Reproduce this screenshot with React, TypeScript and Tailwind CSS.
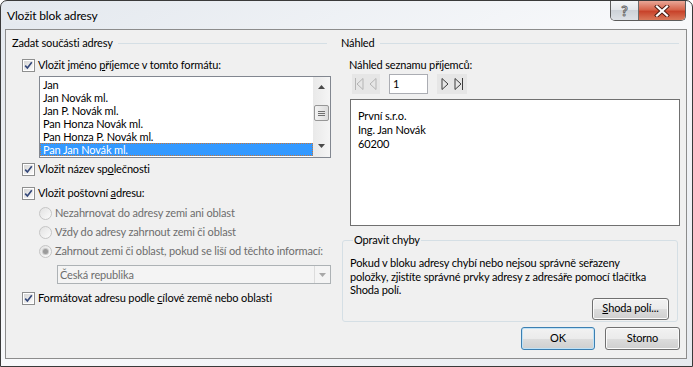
import React from 'react';

const Check = () => (
  <span className="flex h-[13px] w-[13px] shrink-0 items-center justify-center border border-[#8e8f8f] bg-white p-px">
    <span className="flex h-full w-full items-center justify-center bg-gradient-to-br from-[#d6d6d6] to-[#fbfbfb]">
      <svg width="9" height="9" viewBox="0 0 9 9">
        <path d="M1.2 4.6 L3.4 7 L7.8 1.2" fill="none" stroke="#34487a" strokeWidth="1.6" />
      </svg>
    </span>
  </span>
);

const Radio = ({ checked }: { checked?: boolean }) => (
  <span className="flex h-[13px] w-[13px] shrink-0 items-center justify-center rounded-full border border-[#c5c5c5] bg-gradient-to-br from-[#e2e2e2] to-[#fbfbfb]">
    {checked && <span className="h-[5px] w-[5px] rounded-full bg-[#9b9b9b] shadow-[0_0_0_1px_#c9c9c9]" />}
  </span>
);

const GroupHeader = ({ label }: { label: string }) => (
  <div className="flex h-[14px] items-center">
    <span className="leading-[14px]">{label}</span>
    <span className="ml-[5px] h-px flex-1 bg-[#d5dfe5]" />
  </div>
);

const WinButton = ({ children, className, isDefault }: { children: React.ReactNode; className: string; isDefault?: boolean }) => (
  <button
    className={`flex items-center justify-center rounded-[3px] border bg-[linear-gradient(#f2f2f2_0%,#ebebeb_50%,#dddddd_50%,#cfcfcf_100%)] text-black ${
      isDefault ? 'border-[#3c7fb1] shadow-[inset_0_0_0_1px_#bfe2f7]' : 'border-[#707070] shadow-[inset_0_0_0_1px_#fbfbfb]'
    } ${className}`}
  >
    {children}
  </button>
);

const NavIcon = ({ dir, bar, color }: { dir: 'l' | 'r'; bar?: boolean; color: string }) => (
  <svg width="10" height="14" viewBox="0 0 10 14">
    {dir === 'l' ? (
      <>
        {bar && <line x1="1.5" y1="1" x2="1.5" y2="13" stroke={color} />}
        <path d={bar ? 'M9 1.5 L3 7 L9 12.5 Z' : 'M8 1.5 L2 7 L8 12.5 Z'} fill="none" stroke={color} />
      </>
    ) : (
      <>
        <path d={bar ? 'M1 1.5 L7 7 L1 12.5 Z' : 'M2 1.5 L8 7 L2 12.5 Z'} fill="none" stroke={color} />
        {bar && <line x1="8.5" y1="1" x2="8.5" y2="13" stroke={color} />}
      </>
    )}
  </svg>
);

const names = ['Jan', 'Jan Novák ml.', 'Jan P. Novák ml.', 'Pan Honza Novák ml.', 'Pan Honza P. Novák ml.', 'Pan Jan Novák ml.'];

export default function App() {
  return (
    <div className="h-[367px] w-[693px] overflow-hidden bg-white font-['Lato','Segoe_UI',sans-serif] text-[11px] tracking-[-0.15px] text-black">
      <div className="flex h-[367px] w-[693px] flex-col rounded-t-[7px] border border-[#3a3a3a] bg-gradient-to-br from-[#e3e8ee] via-[#f8f9fb] to-[#e6eaef]">
        {/* Title bar */}
        <div className="flex h-[28px] items-start justify-between">
          <span className="pl-[6px] pt-[8px] text-[12px] leading-[14px] [text-shadow:0_0_6px_#ffffff]">Vložit blok adresy</span>
          <div className="mr-[6px] flex h-[20px] overflow-hidden rounded-b-[5px] border border-t-0 border-[#5b5b5b]">
            <div className="flex w-[28px] items-center justify-center border-r border-[#6b6b6b] bg-[linear-gradient(#f4f5f7_0%,#e2e5e9_50%,#cdd2d8_50%,#dde1e6_100%)]">
              <span className="text-[14px] font-bold leading-none text-white [-webkit-text-stroke:1px_#6a6a6a]">?</span>
            </div>
            <div className="flex w-[46px] items-center justify-center bg-[linear-gradient(#e9a797_0%,#d7654c_45%,#c8432b_55%,#d9785a_100%)]">
              <svg width="16" height="12" viewBox="0 0 16 12">
                <path d="M3 1.5 L13 10.5 M13 1.5 L3 10.5" stroke="#4a1c12" strokeWidth="4" strokeLinecap="square" />
                <path d="M3 1.5 L13 10.5 M13 1.5 L3 10.5" stroke="#ffffff" strokeWidth="2.2" strokeLinecap="square" />
              </svg>
            </div>
          </div>
        </div>

        {/* Content panel */}
        <div className="ml-[4px] flex h-[330px] w-[682px] border border-[#8c8c8c] bg-[#f0f0f0]">
          {/* Left column */}
          <div className="flex w-[329px] flex-col pl-[6px] pr-[8px] pt-[6px]">
            <GroupHeader label="Zadat součásti adresy" />
            <div className="ml-[10px] mt-[8px] flex h-[14px] items-center gap-[3px]">
              <Check />
              <span className="leading-[14px]">
                Vložit jméno <span className="underline">p</span>říjemce v tomto formátu:
              </span>
            </div>
            <div className="ml-[27px] mt-[4px] flex h-[82px] w-[292px] border border-[#828790] bg-white">
              <div className="flex flex-1 flex-col pt-px">
                {names.map((n, i) =>
                  i === names.length - 1 ? (
                    <div key={n} className="h-[13px] border border-dotted border-[#c9773a] bg-[#3399ff] pl-[2px] leading-[11px] text-white">
                      {n}
                    </div>
                  ) : (
                    <div key={n} className="h-[13px] pl-[3px] leading-[13px]">
                      {n}
                    </div>
                  )
                )}
              </div>
              <div className="flex w-[17px] flex-col items-center bg-gradient-to-r from-[#e9e9e9] to-[#f5f5f5]">
                <div className="flex h-[17px] items-center justify-center pt-[2px]">
                  <svg width="7" height="4" viewBox="0 0 7 4">
                    <path d="M0 4 L3.5 0 L7 4 Z" fill="#4a4a4a" />
                  </svg>
                </div>
                <div className="mt-[11px] flex h-[16px] w-[15px] flex-col items-center justify-center gap-px rounded-[2px] border border-[#979797] bg-gradient-to-r from-[#f3f3f3] to-[#dcdcdc]">
                  <span className="h-px w-[7px] bg-[#6f6f6f]" />
                  <span className="h-px w-[7px] bg-[#6f6f6f]" />
                  <span className="h-px w-[7px] bg-[#6f6f6f]" />
                </div>
                <div className="flex flex-1 items-end justify-center pb-[9px]">
                  <svg width="7" height="4" viewBox="0 0 7 4">
                    <path d="M0 0 L3.5 4 L7 0 Z" fill="#4a4a4a" />
                  </svg>
                </div>
              </div>
            </div>
            <div className="ml-[10px] mt-[4px] flex h-[14px] items-center gap-[3px]">
              <Check />
              <span className="leading-[14px]">
                Vložit název sp<span className="underline">o</span>lečnosti
              </span>
            </div>
            <div className="ml-[10px] mt-[10px] flex h-[14px] items-center gap-[3px]">
              <Check />
              <span className="leading-[14px]">
                Vložit poštovní <span className="underline">a</span>dresu:
              </span>
            </div>
            <div className="ml-[27px] mt-[6px] flex h-[14px] items-center gap-[3px] text-[#6d6d6d]">
              <Radio />
              <span className="leading-[14px]">Nezahrnovat do adresy zemi ani oblast</span>
            </div>
            <div className="ml-[27px] mt-[5px] flex h-[14px] items-center gap-[3px] text-[#6d6d6d]">
              <Radio />
              <span className="leading-[14px]">Vždy do adresy zahrnout zemi či oblast</span>
            </div>
            <div className="ml-[27px] mt-[5px] flex h-[14px] items-center gap-[3px] text-[#6d6d6d]">
              <Radio checked />
              <span className="whitespace-nowrap leading-[14px]">Zahrnout zemi či oblast, pokud se liší od těchto informací:</span>
            </div>
            <div className="ml-[45px] mt-[7px] flex h-[19px] w-[274px] border border-[#adb2b5] bg-[#f4f4f4] text-[#6d6d6d]">
              <span className="flex-1 pl-[2px] leading-[17px]">Česká republika</span>
              <div className="flex w-[16px] items-center justify-center border-l border-[#dcdcdc]">
                <svg width="7" height="4" viewBox="0 0 7 4">
                  <path d="M0 0 L3.5 4 L7 0 Z" fill="#a8a8a8" />
                </svg>
              </div>
            </div>
            <div className="ml-[10px] mt-[7px] flex h-[14px] items-center gap-[3px]">
              <Check />
              <span className="leading-[14px]">
                Formátovat adresu podle <span className="underline">c</span>ílové země nebo oblasti
              </span>
            </div>
          </div>

          {/* Right column */}
          <div className="flex flex-1 flex-col pl-[6px] pr-[6px] pt-[6px]">
            <div className="mr-px">
              <GroupHeader label="Náhled" />
            </div>
            <span className="ml-[8px] mt-[8px] h-[14px] leading-[14px]">Náhled seznamu příjemců:</span>
            <div className="ml-[11px] mt-[2px] flex h-[20px] items-center">
              <div className="flex h-[20px] w-[28px] items-center justify-center gap-[4px] bg-[#e6e6e6]">
                <NavIcon dir="l" bar color="#b4b4b4" />
                <NavIcon dir="l" color="#b4b4b4" />
              </div>
              <div className="ml-[9px] flex h-[20px] w-[39px] items-center border border-[#abadb3] bg-white pl-[3px]">1</div>
              <div className="ml-[9px] flex h-[20px] w-[30px] items-center justify-center gap-[4px] bg-[#e6e6e6]">
                <NavIcon dir="r" color="#3c3c3c" />
                <NavIcon dir="r" bar color="#3c3c3c" />
              </div>
            </div>
            <div className="ml-[9px] mt-[5px] h-[127px] w-[330px] border border-[#707070] bg-white pl-[7px] pt-[9px] leading-[14px]">
              <div>První s.r.o.</div>
              <div>Ing. Jan Novák</div>
              <div>60200</div>
            </div>
            <fieldset className="ml-px mr-[2px] mt-[7px] flex h-[89px] flex-col rounded-[3px] border border-[#d5dfe5] pl-[7px] pr-[8px]">
              <legend className="ml-[3px] px-px leading-[14px]">Opravit chyby</legend>
              <p className="mt-[9px] whitespace-nowrap leading-[13.5px]">
                Pokud v bloku adresy chybí nebo nejsou správně seřazeny
                <br />
                položky, zjistíte správné prvky adresy z adresáře pomocí tlačítka
                <br />
                Shoda polí.
              </p>
              <div className="mt-px flex justify-end">
                <WinButton className="h-[22px] w-[77px]">
                  <span className="underline">S</span>hoda polí...
                </WinButton>
              </div>
            </fieldset>
            <div className="mt-[5px] flex justify-end gap-[10px]">
              <WinButton isDefault className="h-[23px] w-[74px]">
                OK
              </WinButton>
              <WinButton className="h-[23px] w-[75px]">Storno</WinButton>
            </div>
          </div>
        </div>
      </div>
    </div>
  );
}
